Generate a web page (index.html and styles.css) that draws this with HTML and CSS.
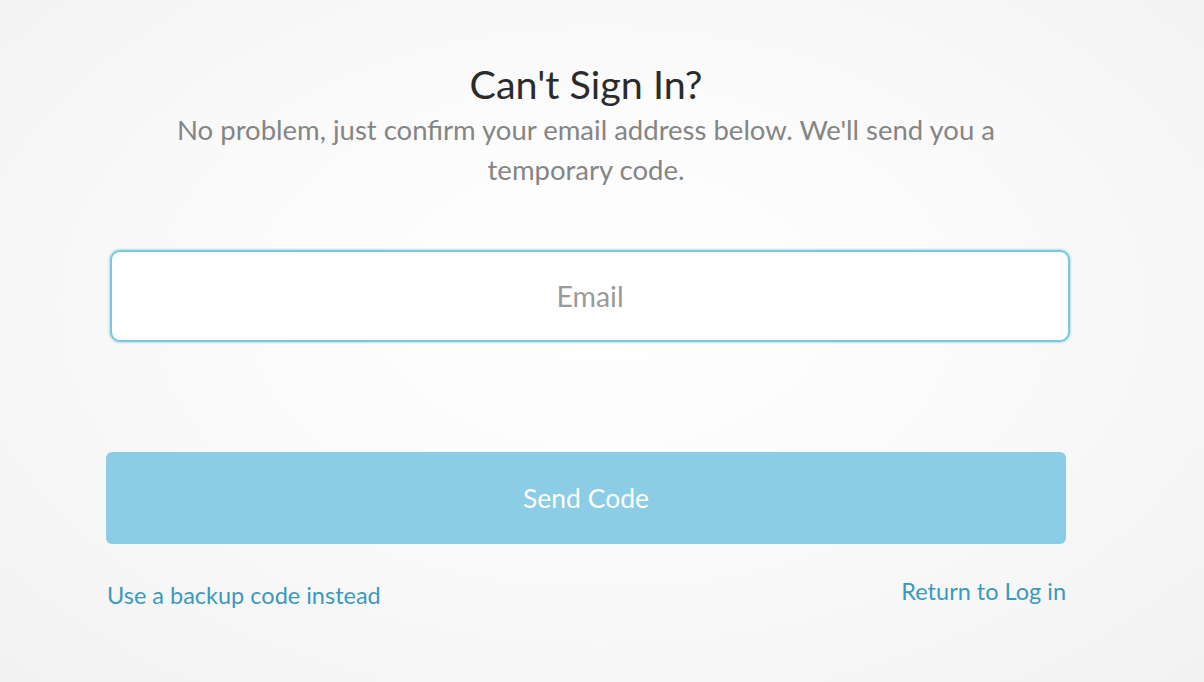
FILE: index.html
```html
<!DOCTYPE html>
<html>
<head>
<meta charset="utf-8">
<link rel="stylesheet" href="styles.css">
</head>
<body>
<main class="page">
  <div class="card">
    <h1 class="title">Can't Sign In?</h1>
    <p class="subtitle">No problem, just confirm your email address below. We'll send you a temporary code.</p>
    <div class="field">
      <input class="input" type="email" placeholder="Email">
    </div>
    <button class="btn">Send Code</button>
    <div class="links">
      <a class="link link-left" href="#">Use a backup code instead</a>
      <a class="link link-right" href="#">Return to Log in</a>
    </div>
  </div>
</main>
</body>
</html>
```
FILE: styles.css
```css
html, body {
  margin: 0;
  height: 100%;
}
body {
  background: radial-gradient(ellipse at 50% 45%, #ffffff 0%, #fbfbfb 40%, #f2f2f2 100%);
  font-family: Lato, "Open Sans", sans-serif;
}
.page {
  padding-left: 106px;
  padding-top: 58px;
}
.card {
  width: 960px;
  display: flex;
  flex-direction: column;
}
.title {
  margin: 0;
  font-size: 39.5px;
  font-weight: 400;
  color: #2b2b2b;
  text-align: center;
  line-height: 52px;
}
.subtitle {
  margin: 0 auto;
  width: 880px;
  font-size: 27.5px;
  line-height: 40px;
  color: #858585;
  text-align: center;
}
.field {
  margin-top: 60px;
  padding-left: 4px;
}
.input {
  box-sizing: border-box;
  width: 960px;
  height: 92px;
  border: 2px solid #7cc6df;
  border-radius: 10px;
  box-shadow: 0 0 2px 1px rgba(124, 198, 223, 0.5);
  background: #fff;
  font-family: Lato, sans-serif;
  font-size: 28.5px;
  text-align: center;
  color: #333;
  outline: none;
}
.input::placeholder {
  color: #9a9a9a;
}
.btn {
  margin-top: 110px;
  height: 92px;
  width: 960px;
  border: none;
  border-radius: 6px;
  background: #8bcde4;
  color: #fff;
  font-family: Lato, sans-serif;
  font-size: 26.5px;
  padding: 0;
}
.links {
  display: flex;
  justify-content: space-between;
  align-items: flex-start;
  margin-top: 32px;
}
.link {
  color: #3a9abd;
  font-size: 23.5px;
  text-decoration: none;
  line-height: 30px;
}
.link-left {
  margin-top: 4px;
  margin-left: 1px;
}
```
